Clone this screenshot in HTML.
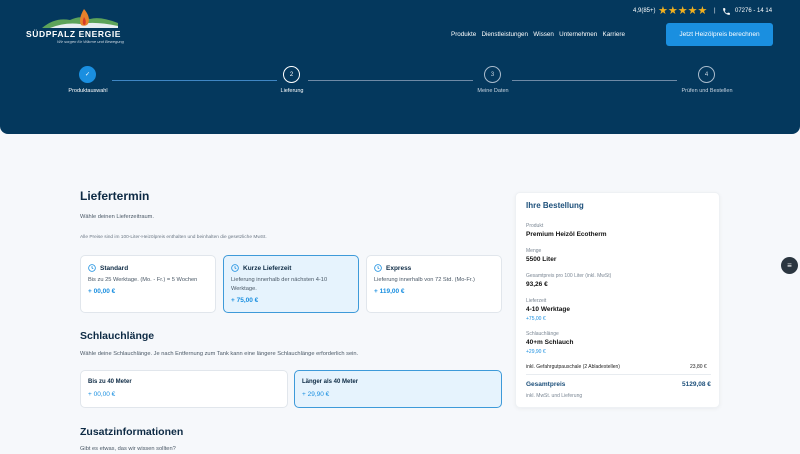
<!DOCTYPE html>
<html><head><meta charset="utf-8"><style>
*{margin:0;padding:0;box-sizing:border-box}
body{width:800px;height:450px;overflow:hidden;background:#f6f8fb;font-family:"Liberation Sans",sans-serif;color:#0d2a44;position:relative}
.hdr{position:absolute;left:0;top:0;width:800px;height:134px;background:#04385d;border-radius:0 0 8px 8px}
.t{position:absolute;white-space:nowrap}
.w{color:#fff}
.btn{position:absolute;left:666px;top:23px;width:107px;height:23px;background:#1a8fe0;border-radius:3px;color:#fff;font-size:6.5px;text-align:center;line-height:23px}
.line{position:absolute;top:80px;height:1px;background:#6f8aa6}
.circ{position:absolute;width:17px;height:17px;border-radius:50%;border:1px solid #a9bbcc;color:#c8d4e0;font-size:6px;display:flex;align-items:center;justify-content:center;top:66px}
.lbl{position:absolute;top:88px;font-size:5.5px;color:#c8d4e0;transform:translateX(-50%)}
.card{position:absolute;background:#fff;border:1px solid #e1e6ec;border-radius:5px}
.sel{background:#e6f3fd;border:1.5px solid #3e9ad9}
.ct{font-size:6.5px;font-weight:bold;color:#0d2a44;display:flex;align-items:center}
.cd{font-size:5.7px;color:#4a5866;line-height:9px}
.cp{font-size:6.5px;color:#1a8fe0;font-weight:bold}
.h2{font-size:12px;font-weight:bold;color:#0d2a44}
.clk{margin-right:4px}
.sl{font-size:5px;color:#7b8794}
.sv{font-size:6.5px;font-weight:bold;color:#111}
.sb{font-size:5px;color:#1a8fe0}
</style></head><body>
<div class="hdr">
 <svg class="t" style="left:40px;top:8px" width="80" height="22" viewBox="0 0 80 22">
  <path d="M2 20 Q15 9 30 12 Q40 7 50 11 Q60 8 78 15 L78 20 Z" fill="#5da35a"/>
  <path d="M10 20 Q25 14 40 16 Q55 13 78 18 L78 20 Z" fill="#e8eef2"/>
  <path d="M44 1 Q51 9 48 16 Q45 19 41 17 Q38 11 44 1 Z" fill="#e9812b"/>
  <path d="M44 9 Q47 13 45 17 Q42 17 43 12Z" fill="#d63b2a"/>
 </svg>
 <div class="t w" style="left:26px;top:29px;font-size:8.5px;font-weight:bold;letter-spacing:0.6px">SÜDPFALZ ENERGIE</div>
 <div class="t" style="left:57px;top:39px;font-size:4px;color:#cfd9e3;font-style:italic">Wir sorgen für Wärme und Bewegung</div>
 <div class="t w" style="left:633px;top:8px;font-size:6px">4,9(85+)</div>
 <div class="t" style="left:658px;top:4px;font-size:11px;color:#f2b01e;letter-spacing:0px">★★★★★</div>
 <div class="t w" style="left:714px;top:8px;font-size:6px">|</div>
 <svg class="t" style="left:722px;top:7px" width="9" height="9" viewBox="0 0 24 24"><path fill="#fff" d="M6.6 10.8a15 15 0 0 0 6.6 6.6l2.2-2.2c.3-.3.7-.4 1-.2 1.1.4 2.3.6 3.6.6.6 0 1 .4 1 1V20c0 .6-.4 1-1 1A17 17 0 0 1 3 4c0-.6.4-1 1-1h3.5c.6 0 1 .4 1 1 0 1.3.2 2.5.6 3.6.1.3 0 .7-.2 1z"/></svg>
 <div class="t w" style="left:735px;top:8px;font-size:6px">07276 - 14 14</div>
 <div class="t w" style="left:451px;top:31px;font-size:6.3px">Produkte&nbsp;&nbsp; Dienstleistungen&nbsp;&nbsp; Wissen&nbsp;&nbsp; Unternehmen&nbsp;&nbsp; Karriere</div>
 <div class="btn">Jetzt Heizölpreis berechnen</div>
 <div class="line" style="left:112px;width:165px;background:#3f86c4"></div>
 <div class="line" style="left:308px;width:165px"></div>
 <div class="line" style="left:512px;width:165px"></div>
 <div class="circ" style="left:79px;background:#1a8fe0;border-color:#1a8fe0;color:#fff">✓</div>
 <div class="circ" style="left:283px;border-color:#fff;color:#fff">2</div>
 <div class="circ" style="left:484px">3</div>
 <div class="circ" style="left:698px">4</div>
 <div class="lbl" style="left:88px;color:#fff">Produktauswahl</div>
 <div class="lbl" style="left:292px;color:#fff">Lieferung</div>
 <div class="lbl" style="left:493px">Meine Daten</div>
 <div class="lbl" style="left:707px">Prüfen und Bestellen</div>
</div>

<div class="t h2" style="left:80px;top:189px">Liefertermin</div>
<div class="t cd" style="left:80px;top:213px">Wähle deinen Lieferzeitraum.</div>
<div class="t" style="left:80px;top:235px;font-size:4.8px;color:#6b7784">Alle Preise sind im 100-Liter-Heizölpreis enthalten und beinhalten die gesetzliche MwSt.</div>

<div class="card" style="left:80px;top:255px;width:136px;height:58px;padding:8px 7px">
 <div class="ct"><svg class="clk" width="8" height="8" viewBox="0 0 10 10"><circle cx="5" cy="5" r="4.2" fill="none" stroke="#1a8fe0" stroke-width="1"/><path d="M5 2.6V5l1.6 1" fill="none" stroke="#1a8fe0" stroke-width="1"/></svg>Standard</div>
 <div class="cd" style="margin-top:4px">Bis zu 25 Werktage. (Mo. - Fr.) = 5 Wochen</div>
 <div class="cp" style="margin-top:3px">+ 00,00 €</div></div>
<div class="card sel" style="left:223px;top:255px;width:136px;height:58px;padding:8px 7px">
 <div class="ct"><svg class="clk" width="8" height="8" viewBox="0 0 10 10"><circle cx="5" cy="5" r="4.2" fill="none" stroke="#1a8fe0" stroke-width="1"/><path d="M5 2.6V5l1.6 1" fill="none" stroke="#1a8fe0" stroke-width="1"/></svg>Kurze Lieferzeit</div>
 <div class="cd" style="margin-top:4px">Lieferung innerhalb der nächsten 4-10<br>Werktage.</div>
 <div class="cp" style="margin-top:3px">+ 75,00 €</div></div>
<div class="card" style="left:366px;top:255px;width:136px;height:58px;padding:8px 7px">
 <div class="ct"><svg class="clk" width="8" height="8" viewBox="0 0 10 10"><circle cx="5" cy="5" r="4.2" fill="none" stroke="#1a8fe0" stroke-width="1"/><path d="M5 2.6V5l1.6 1" fill="none" stroke="#1a8fe0" stroke-width="1"/></svg>Express</div>
 <div class="cd" style="margin-top:4px">Lieferung innerhalb von 72 Std. (Mo-Fr.)</div>
 <div class="cp" style="margin-top:3px">+ 119,00 €</div></div>

<div class="t h2" style="left:80px;top:330px;font-size:10.5px">Schlauchlänge</div>
<div class="t cd" style="left:80px;top:350px">Wähle deine Schlauchlänge. Je nach Entfernung zum Tank kann eine längere Schlauchlänge erforderlich sein.</div>
<div class="card" style="left:80px;top:370px;width:208px;height:38px;padding:8px 7px">
 <div class="ct" style="font-size:6px">Bis zu 40 Meter</div><div class="cp" style="margin-top:6px;font-weight:normal">+ 00,00 €</div></div>
<div class="card sel" style="left:294px;top:370px;width:208px;height:38px;padding:8px 7px">
 <div class="ct" style="font-size:6px">Länger als 40 Meter</div><div class="cp" style="margin-top:6px;font-weight:normal">+ 29,90 €</div></div>
<div class="t h2" style="left:80px;top:426px;font-size:10.5px">Zusatzinformationen</div>
<div class="t cd" style="left:80px;top:445px">Gibt es etwas, das wir wissen sollten?</div>

<div class="card" style="left:515px;top:192px;width:205px;height:216px;border-color:#eef1f4;box-shadow:0 1px 4px rgba(0,0,0,0.05)">
 <div class="t" style="left:10px;top:8px;font-size:8px;font-weight:bold;color:#1c4f7a">Ihre Bestellung</div>
 <div class="t sl" style="left:10px;top:30px">Produkt</div><div class="t sv" style="left:10px;top:38px">Premium Heizöl Ecotherm</div>
 <div class="t sl" style="left:10px;top:55px">Menge</div><div class="t sv" style="left:10px;top:63px">5500 Liter</div>
 <div class="t sl" style="left:10px;top:80px">Gesamtpreis pro 100 Liter (inkl. MwSt)</div><div class="t sv" style="left:10px;top:88px">93,26 €</div>
 <div class="t sl" style="left:10px;top:105px">Lieferzeit</div><div class="t sv" style="left:10px;top:113px">4-10 Werktage</div><div class="t sb" style="left:10px;top:123px">+75,00 €</div>
 <div class="t sl" style="left:10px;top:138px">Schlauchlänge</div><div class="t sv" style="left:10px;top:146px">40+m Schlauch</div><div class="t sb" style="left:10px;top:156px">+29,90 €</div>
 <div class="t" style="left:10px;top:171px;font-size:5px;color:#222">inkl. Gefahrgutpauschale (2 Abladestellen)</div>
 <div class="t" style="left:174px;top:171px;font-size:5px;color:#222">23,80 €</div>
 <div class="t" style="left:10px;top:181px;width:185px;height:1px;background:#e8ecf0"></div>
 <div class="t" style="left:10px;top:188px;font-size:6.5px;font-weight:bold;color:#1c4f7a">Gesamtpreis</div>
 <div class="t" style="left:166px;top:188px;font-size:6.5px;font-weight:bold;color:#1c4f7a">5129,08 €</div>
 <div class="t sl" style="left:10px;top:200px">inkl. MwSt. und Lieferung</div>
</div>
<div class="t" style="left:781px;top:257px;width:17px;height:17px;border-radius:50%;background:#2b3640;color:#fff;font-size:8px;display:flex;align-items:center;justify-content:center">≡</div>
</body></html>
